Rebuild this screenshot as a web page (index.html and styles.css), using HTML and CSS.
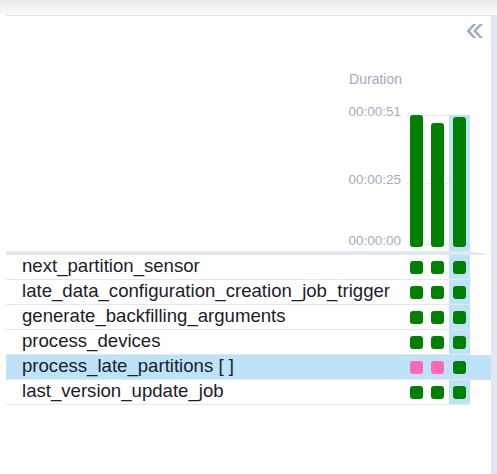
FILE: index.html
```
<!DOCTYPE html>
<html>
<head>
<meta charset="utf-8">
<link rel="stylesheet" href="styles.css">
</head>
<body>
<div class="shade"></div>
<div class="frame">
  <div class="panel">
    <div class="toolbar">
      <svg class="collapse" width="17" height="14" viewBox="0 0 17 14">
        <polygon points="7,0 10.5,0 4,7 10.5,14 7,14 0.5,7" fill="#a0aec0"/>
        <polygon points="13.5,0 17,0 10.5,7 17,14 13.5,14 7,7" fill="#a0aec0"/>
      </svg>
    </div>
    <div class="hrow">
      <div class="hlabel">Duration</div>
      <div class="runs"></div>
      <div class="tail"></div>
    </div>
    <div class="chart">
      <div class="axis">
        <span class="tick t51">00:00:51</span>
        <span class="tick t25">00:00:25</span>
        <span class="tick t00">00:00:00</span>
      </div>
      <div class="bars">
        <div class="gridline g51"></div>
        <div class="gridline g25"></div>
        <div class="gridline g00"></div>
        <div class="barcol"><div class="bar" style="height:132px"></div></div>
        <div class="barcol"><div class="bar" style="height:124px"></div></div>
        <div class="barcol selcol"><div class="bar" style="height:130px"></div></div>
      </div>
      <div class="tail"></div>
    </div>
    <div class="band"></div>
    <div class="row">
      <div class="name">next_partition_sensor</div>
      <div class="cell"><span class="sq ok"></span></div>
      <div class="cell"><span class="sq ok"></span></div>
      <div class="cell selcol"><span class="sq ok"></span></div>
      <div class="tail"></div>
    </div>
    <div class="row">
      <div class="name">late_data_configuration_creation_job_trigger</div>
      <div class="cell"><span class="sq ok"></span></div>
      <div class="cell"><span class="sq ok"></span></div>
      <div class="cell selcol"><span class="sq ok"></span></div>
      <div class="tail"></div>
    </div>
    <div class="row">
      <div class="name">generate_backfilling_arguments</div>
      <div class="cell"><span class="sq ok"></span></div>
      <div class="cell"><span class="sq ok"></span></div>
      <div class="cell selcol"><span class="sq ok"></span></div>
      <div class="tail"></div>
    </div>
    <div class="row">
      <div class="name">process_devices</div>
      <div class="cell"><span class="sq ok"></span></div>
      <div class="cell"><span class="sq ok"></span></div>
      <div class="cell selcol"><span class="sq ok"></span></div>
      <div class="tail"></div>
    </div>
    <div class="row selected">
      <div class="name">process_late_partitions [ ]</div>
      <div class="cell"><span class="sq retry"></span></div>
      <div class="cell"><span class="sq retry"></span></div>
      <div class="cell selcol"><span class="sq ok"></span></div>
      <div class="tail"></div>
    </div>
    <div class="row last">
      <div class="name">last_version_update_job</div>
      <div class="cell"><span class="sq ok"></span></div>
      <div class="cell"><span class="sq ok"></span></div>
      <div class="cell selcol"><span class="sq ok"></span></div>
      <div class="tail"></div>
    </div>
  </div>
  <div class="rail"></div>
</div>
</body>
</html>
```
FILE: styles.css
```
* { box-sizing: border-box; }
html, body { margin: 0; padding: 0; background: #ffffff; }
body {
  font-family: "Liberation Sans", Arial, sans-serif;
  color: #1a202c;
  width: 497px;
  height: 474px;
  overflow: hidden;
}
.shade {
  height: 15px;
  background: linear-gradient(#ebebeb, #fcfcfc);
}
.frame {
  display: flex;
  margin-left: 6px;
  border-top: 1px solid #dfe5ee;
  height: 459px;
}
.panel {
  width: 485px;
  display: flex;
  flex-direction: column;
}
.rail {
  width: 6px;
  background: #e2e8f0;
}
.toolbar {
  height: 22px;
  padding-top: 8px;
  padding-right: 8px;
  display: flex;
  justify-content: flex-end;
}
.collapse { display: block; }
.hrow {
  display: flex;
  margin-top: 33px;
  height: 16px;
}
.hlabel {
  flex: 1;
  text-align: right;
  padding-right: 3.5px;
  font-size: 14px;
  line-height: 16px;
  color: #a0aec0;
}
.runs { width: 64.5px; }
.tail { width: 21px; flex-shrink: 0; }
.chart {
  display: flex;
  margin-top: 28px;
  height: 136px;
}
.axis {
  flex: 1;
  position: relative;
}
.tick {
  position: absolute;
  right: 4.5px;
  font-size: 13.5px;
  line-height: 13.5px;
  color: #a0aec0;
}
.t51 { top: -10px; }
.t25 { top: 58px; }
.t00 { top: 119px; }
.bars {
  width: 64.5px;
  position: relative;
  display: flex;
}
.gridline {
  position: absolute;
  left: 1px;
  right: 0;
  height: 1px;
  background: #e6ebf2;
}
.g51 { top: 0; }
.g25 { top: 68px; }
.g00 { top: 129px; }
.barcol {
  width: 21.5px;
  display: flex;
  align-items: flex-end;
  justify-content: center;
  padding-bottom: 4px;
  position: relative;
}
.bar {
  width: 13px;
  background: #008000;
  border-radius: 3px;
}
.selcol { background: #bee3f8; }
.band {
  height: 4px;
  width: 484px;
  background: #e2e8f0;
  clip-path: polygon(0 0, calc(100% - 20px) 0, 100% 100%, 0 100%);
}
.row {
  display: flex;
  height: 25px;
}
.name, .cell {
  border-bottom: 1px solid #e2e8f0;
}
.name {
  flex: 1;
  padding-left: 16px;
  padding-bottom: 2px;
  font-size: 18.6px;
  display: flex;
  align-items: center;
  white-space: nowrap;
}
.cell {
  width: 21.5px;
  display: flex;
  align-items: center;
  justify-content: center;
}
.row.selected { background: #bee3f8; }
.sq {
  display: block;
  width: 13px;
  height: 13px;
  border-radius: 3px;
}
.sq.ok { background: #008000; }
.sq.retry { background: #ff69b4; }
```
